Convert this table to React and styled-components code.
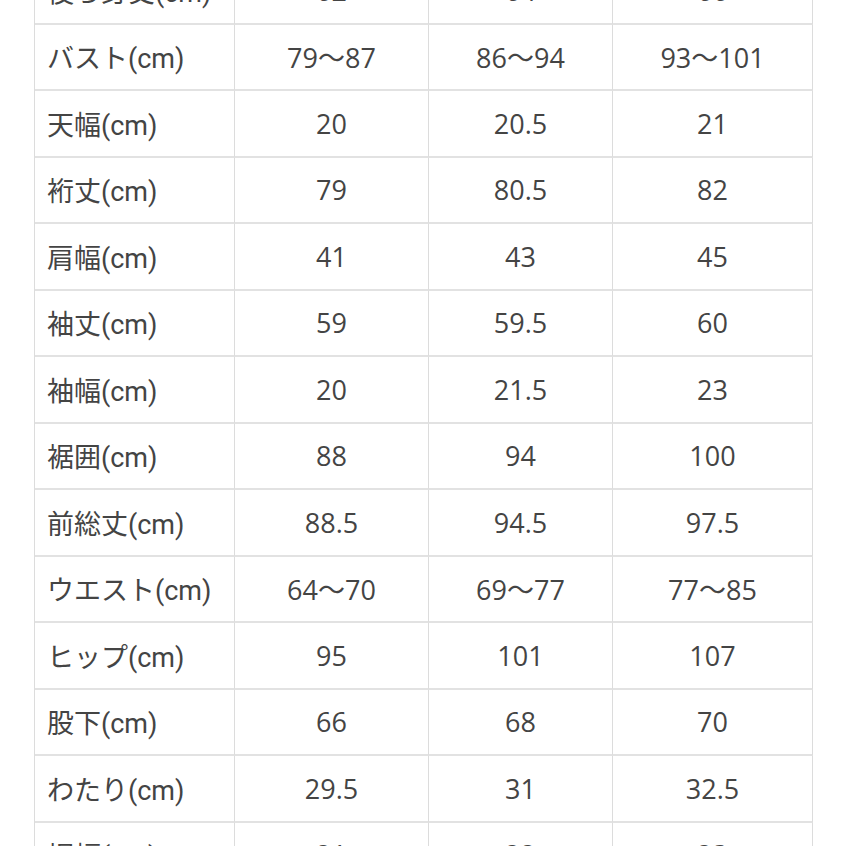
import React from 'react';
import styled, { createGlobalStyle } from 'styled-components';

const GlobalStyle = createGlobalStyle`
  html, body {
    margin: 0;
    padding: 0;
    background: #ffffff;
    overflow: hidden;
  }
`;

const Page = styled.div`
  width: 846px;
  height: 846px;
  overflow: hidden;
  padding-left: 34px;
  box-sizing: border-box;
`;

const SizeTable = styled.div`
  display: grid;
  grid-template-columns: 200px 194px 184px 200px;
  margin-top: -42px;
  border-left: 1px solid #dcdcdc;
  width: 779px;
`;

const Cell = styled.div`
  height: 66.5px;
  box-sizing: border-box;
  border-right: 1px solid #dcdcdc;
  border-bottom: 2px solid #e2e2e2;
  display: flex;
  align-items: center;
  justify-content: ${p => (p.$label ? 'flex-start' : 'center')};
  padding-left: ${p => (p.$label ? '12px' : '0')};
  color: #444444;
  font-family: ${p => (p.$label
    ? 'Roboto, "Noto Sans CJK JP", sans-serif'
    : '"Open Sans", "Noto Sans CJK JP", sans-serif')};
  font-size: 27px;
  font-weight: ${p => (p.$label ? 400 : 400)};
  white-space: nowrap;
`;

const rows = [
  ['後ろ身丈(cm)', '62', '64', '66'],
  ['バスト(cm)', '79～87', '86～94', '93～101'],
  ['天幅(cm)', '20', '20.5', '21'],
  ['裄丈(cm)', '79', '80.5', '82'],
  ['肩幅(cm)', '41', '43', '45'],
  ['袖丈(cm)', '59', '59.5', '60'],
  ['袖幅(cm)', '20', '21.5', '23'],
  ['裾囲(cm)', '88', '94', '100'],
  ['前総丈(cm)', '88.5', '94.5', '97.5'],
  ['ウエスト(cm)', '64～70', '69～77', '77～85'],
  ['ヒップ(cm)', '95', '101', '107'],
  ['股下(cm)', '66', '68', '70'],
  ['わたり(cm)', '29.5', '31', '32.5'],
  ['裾幅(cm)', '21', '22', '23'],
];

export default function App() {
  return (
    <Page>
      <GlobalStyle />
      <SizeTable>
        {rows.map((row, i) =>
          row.map((val, j) => (
            <Cell key={`${i}-${j}`} $label={j === 0}>{val}</Cell>
          ))
        )}
      </SizeTable>
    </Page>
  );
}
